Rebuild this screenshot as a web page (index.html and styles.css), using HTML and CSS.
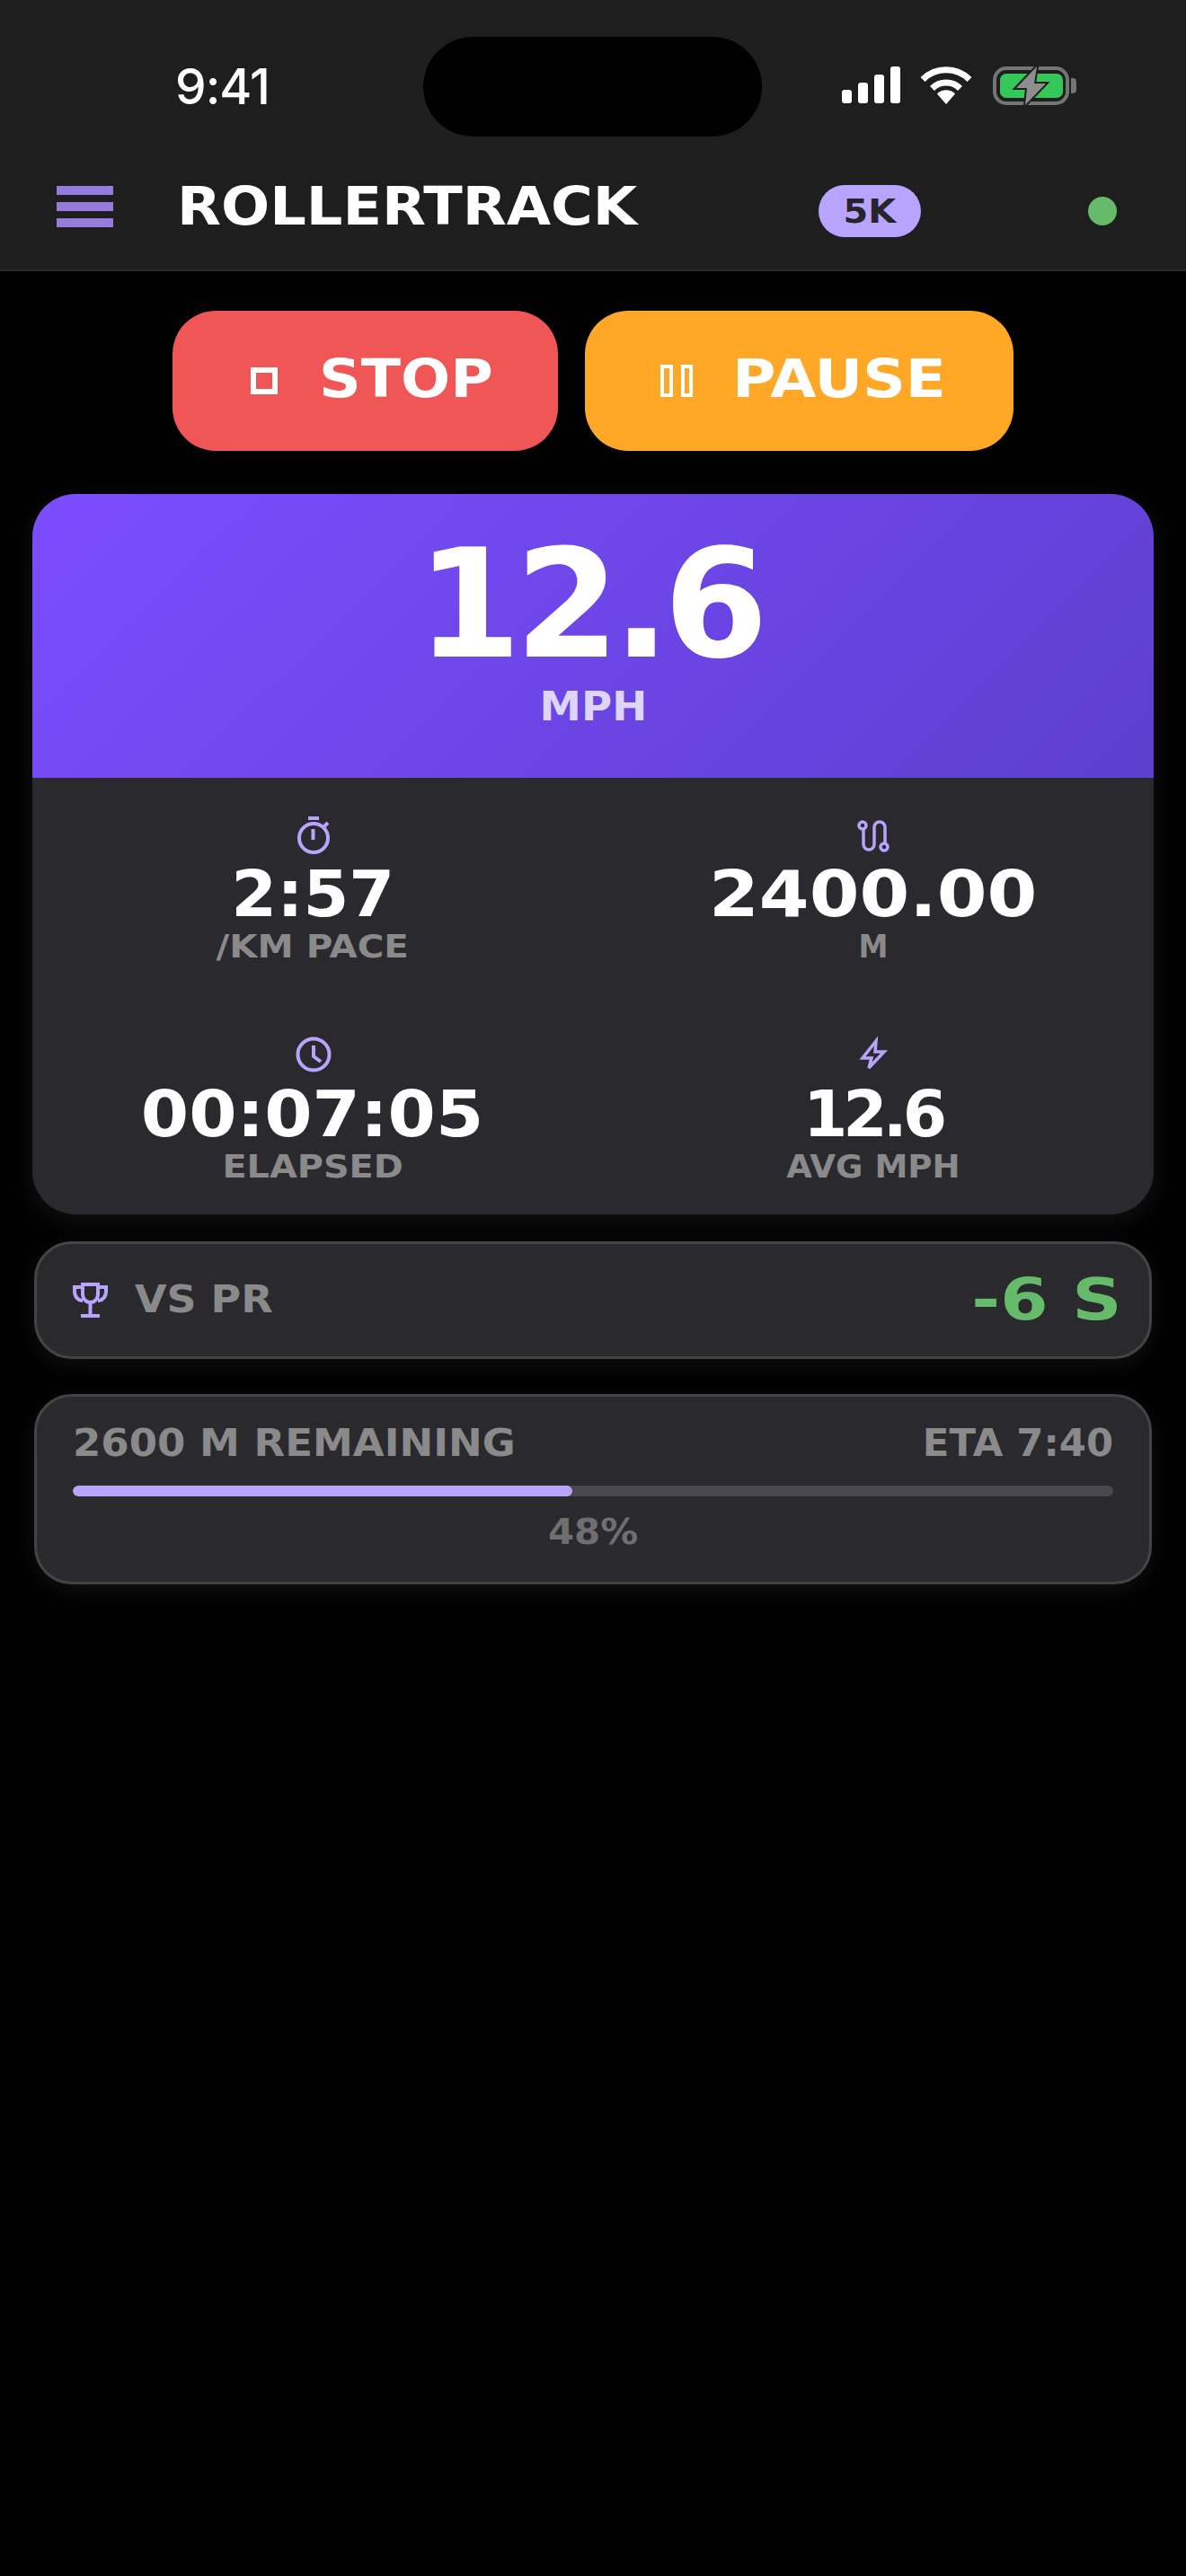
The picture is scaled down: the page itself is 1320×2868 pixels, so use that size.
FILE: index.html
```html
<!DOCTYPE html>
<html lang="en">
<head>
<meta charset="utf-8">
<title>RollerTrack</title>
<link rel="stylesheet" href="styles.css">
</head>
<body>
<header class="chrome">
  <div class="status">
    <span class="time">9:41</span>
    <div class="island"></div>
    <div class="status-icons">
      <svg class="sig" viewBox="0 0 65 41" width="65" height="41"><rect x="0" y="26" width="11" height="15" rx="3"/><rect x="18" y="18" width="11" height="23" rx="3"/><rect x="36" y="9" width="11" height="32" rx="3"/><rect x="54" y="0" width="11" height="41" rx="3"/></svg>
      <svg class="wifi" viewBox="0 0 58 42" width="58" height="42"><path class="wifi-arc" d="M3 14.5A37 37 0 0 1 55 14.5"/><path class="wifi-arc" d="M13.5 24.5A22 22 0 0 1 44.5 24.5"/><path class="wifi-dot" d="M29 42L19 30.500A14 14 0 0 1 39 30.500Z"/></svg>
      <svg class="batt" viewBox="0 0 93 47" width="93" height="47"><rect class="batt-shell" x="2" y="4" width="81" height="39" rx="13"/><rect class="batt-fill" x="8" y="10" width="70" height="27" rx="7"/><path class="batt-cap" d="M87 15h2a4 4 0 0 1 4 4v9a4 4 0 0 1-4 4h-2z"/><path class="batt-bolt" d="M49 2L26 26H38L36 45L59 21H46Z"/></svg>
    </div>
  </div>
  <div class="topbar">
    <div class="menu"><span></span><span></span><span></span></div>
    <div class="brand"><span class="wide sx-brand">ROLLERTRACK</span></div>
    <div class="badge"><span class="wide sx-badge">5K</span></div>
    <div class="live"></div>
  </div>
</header>

<main>
  <div class="actions">
    <button class="btn btn-stop"><span class="ico-stop"></span><span class="btn-text wide sx-stop">STOP</span></button>
    <button class="btn btn-pause"><span class="ico-pause"><i></i><i></i></span><span class="btn-text wide sx-pause">PAUSE</span></button>
  </div>

  <section class="metrics">
    <div class="hero">
      <div class="hero-value">12.6</div>
      <div class="hero-unit"><span class="wide sx-mph">MPH</span></div>
    </div>
    <div class="stats">
      <div class="stat">
        <svg class="ico" viewBox="0 0 48 48" width="48" height="48"><circle cx="25" cy="27" r="16"/><path d="M19 5H31M24.500 17V29M36 15L41 10"/></svg>
        <div class="val sx-pace">2:57</div>
        <div class="lab sx-lab-pace">/KM PACE</div>
      </div>
      <div class="stat">
        <svg class="ico ico-thin" viewBox="0 0 48 48" width="48" height="48"><circle cx="12" cy="13" r="4"/><circle cx="36" cy="37" r="4"/><path d="M13 17V34a6 6 0 0 0 12 0V15a6 6 0 0 1 12 0V33"/></svg>
        <div class="val sx-dist">2400.00</div>
        <div class="lab sx-lab-m">M</div>
      </div>
      <div class="stat">
        <svg class="ico" viewBox="0 0 48 48" width="48" height="48"><circle cx="25" cy="23" r="17.500"/><path d="M25 13V25L33 31"/></svg>
        <div class="val sx-elapsed">00:07:05</div>
        <div class="lab sx-lab-elapsed">ELAPSED</div>
      </div>
      <div class="stat">
        <svg class="ico ico-thin" viewBox="0 0 48 48" width="48" height="48"><path d="M27 8L12 27H22L19 38L36 20H26Z"/></svg>
        <div class="val sx-avg">12.6</div>
        <div class="lab sx-lab-avg">AVG MPH</div>
      </div>
    </div>
  </section>

  <section class="panel pr">
    <div class="pr-left">
      <svg class="ico" viewBox="0 0 48 48" width="48" height="48"><path d="M16 6H33V17a8.500 9 0 0 1-17 0Z"/><path d="M15 9H7V14A9 10 0 0 0 16 24M34 9H42V14A9 10 0 0 1 33 24M24.500 27V41M14 41H35"/></svg>
      <span class="pr-label wide sx-vs">VS PR</span>
    </div>
    <span class="pr-delta wide sx-delta">-6 S</span>
  </section>

  <section class="panel progress">
    <div class="progress-head">
      <span class="wide sx-remain">2600 M REMAINING</span>
      <span class="wide sx-eta">ETA 7:40</span>
    </div>
    <div class="track"><div class="fill" style="width:48%"></div></div>
    <div class="pct"><span class="wide sx-pct">48%</span></div>
  </section>
</main>
</body>
</html>
```

FILE: styles.css
```css
* { box-sizing: border-box; }
html, body { margin: 0; padding: 0; }
body {
  width: 1320px;
  height: 2868px;
  overflow: hidden;
  background: #000;
  color: #fff;
  font-family: "DejaVu Sans", sans-serif;
  font-weight: 700;
}

.wide { display: inline-block; }
.sx-brand { transform: scaleX(1.08); transform-origin: left center; }
.sx-badge { transform: scaleX(1.05); }
.sx-stop { transform: scaleX(1.1); transform-origin: left center; }
.sx-pause { transform: scaleX(1.12); transform-origin: left center; }
.sx-mph { transform: scaleX(1.06); }
.sx-pace { transform: scaleX(1.03); }
.sx-dist { transform: scaleX(1.13); }
.sx-elapsed { transform: scaleX(1.08); }
.sx-avg { letter-spacing: -5px; }
.sx-lab-pace { transform: scaleX(1.12); }
.sx-lab-m { transform: scaleX(.92); }
.sx-lab-elapsed { transform: scaleX(1.105); }
.sx-lab-avg { transform: scaleX(1.03); }
.sx-vs { transform: scaleX(1.08); transform-origin: left center; }
.sx-delta { transform: scaleX(1.19); transform-origin: right center; }
.sx-remain { transform: scaleX(1.06); transform-origin: left center; }
.sx-eta { transform: scaleX(1.02); transform-origin: right center; }
.sx-pct { transform: scaleX(1.087); }

/* status + app bar */
.chrome {
  background: #1e1e1e;
  border-bottom: 2px solid #2b2b2b;
  height: 302px;
  padding-top: 41px;
}
.status {
  display: flex;
  align-items: center;
  height: 111px;
}
.time {
  width: 471px;
  padding-left: 195px;
  font-family: Inter, sans-serif;
  font-weight: 500;
  font-size: 55px;
  letter-spacing: -1px;
  line-height: 111px;
}
.island {
  width: 377px;
  height: 111px;
  border-radius: 56px;
  background: #000;
}
.status-icons {
  display: flex;
  align-items: flex-start;
  margin-left: 89px;
}
.sig { fill: #fff; margin-right: 22px; }
.wifi { margin-right: 23px; }
.wifi-arc { fill: none; stroke: #fff; stroke-width: 7; }
.wifi-dot { fill: #fff; }
.batt { margin-top: -2px; overflow: visible; }
.batt-shell { fill: none; stroke: #757575; stroke-width: 4; }
.batt-fill { fill: #34c759; }
.batt-cap { fill: #757575; }
.batt-bolt { fill: #8e8e8e; stroke: #1e1e1e; stroke-width: 4; paint-order: stroke; }

.topbar {
  display: flex;
  align-items: center;
  height: 130px;
  margin-top: 18px;
  padding-left: 63px;
}
.menu {
  display: flex;
  flex-direction: column;
  gap: 8px;
  width: 63px;
  margin-right: 71px;
  margin-bottom: 10px;
}
.menu span { display: block; height: 10px; background: #967bdf; }
.brand {
  width: 714px;
  font-size: 59px;
  line-height: 60px;
  margin-bottom: 10px;
}
.badge {
  width: 114px;
  height: 58px;
  border-radius: 29px;
  background: #b8a4fd;
  color: #26252b;
  font-size: 38px;
  line-height: 58px;
  text-align: center;
}
.live {
  width: 32px;
  height: 32px;
  border-radius: 50%;
  background: #66bb6a;
  margin-left: 186px;
}

/* action buttons */
.actions {
  display: flex;
  justify-content: center;
  gap: 30px;
  margin-top: 44px;
}
.btn {
  display: flex;
  align-items: center;
  height: 156px;
  border: 0;
  border-radius: 48px;
  color: #fff;
  font-family: inherit;
  font-weight: 700;
  padding: 0;
}
.btn-stop { width: 429px; background: #f05656; padding-left: 87px; }
.btn-pause { width: 477px; background: #ffa726; padding-left: 84px; }
.btn-text { font-size: 59px; line-height: 60px; margin-bottom: 4px; }
.sx-stop { margin-left: 46px; }
.sx-pause { margin-left: 44px; }
.ico-stop { width: 30px; height: 30px; border: 6px solid #fff; }
.ico-pause { display: flex; gap: 9px; }
.ico-pause i { display: block; width: 13.500px; height: 36px; border: 4px solid #fff; }

/* main card */
.metrics {
  margin: 48px 36px 0;
  border-radius: 48px;
  overflow: hidden;
  background: #2a2a2e;
  box-shadow: 0 8px 30px rgba(70, 70, 70, .28);
}
.hero {
  height: 316px;
  padding-top: 38px;
  text-align: center;
  background: linear-gradient(135deg, #7c4dff 0%, #5e3fcf 100%);
}
.hero-value {
  font-size: 167px;
  line-height: 170px;
  letter-spacing: -7px;
  padding-right: 8px;
}
.hero-unit {
  margin-top: 4px;
  font-size: 44px;
  line-height: 50px;
  color: rgba(255, 255, 255, .8);
}
.stats {
  display: grid;
  grid-template-columns: 623px 1fr;
  row-gap: 75px;
  padding: 40px 0 31px;
}
.stat {
  display: flex;
  flex-direction: column;
  align-items: center;
}
.stat:nth-child(odd) { padding-left: 1px; }
.ico {
  display: block;
  fill: none;
  stroke: #b8a4fd;
  stroke-width: 4;
  flex: none;
}
.ico-thin { stroke-width: 3.500; }
.val {
  margin-top: 6px;
  font-size: 71px;
  line-height: 72px;
}
.lab {
  font-size: 36px;
  line-height: 44px;
  color: #8a8a8a;
}

/* panels */
.panel {
  margin: 0 38px;
  background: #2a2a2e;
  border: 3px solid #444;
  border-radius: 42px;
  box-shadow: 0 6px 24px rgba(70, 70, 70, .25);
}
.pr {
  display: flex;
  align-items: center;
  justify-content: space-between;
  height: 131px;
  margin-top: 30px;
  padding: 0 30px 0 35px;
}
.pr-left { display: flex; align-items: center; gap: 26px; }
.pr-label {
  font-size: 42.500px;
  line-height: 50px;
  color: #8a8a8a;
  margin-bottom: 2px;
}
.pr-delta {
  font-size: 64.500px;
  line-height: 70px;
  color: #66bb6a;
  margin-bottom: 2px;
}
.progress {
  margin-top: 39px;
  padding: 27px 40px 33px;
}
.progress-head {
  display: flex;
  justify-content: space-between;
  font-size: 42.500px;
  line-height: 50px;
  color: #8a8a8a;
}
.track {
  height: 12px;
  margin-top: 22px;
  border-radius: 6px;
  background: #49484e;
  overflow: hidden;
}
.fill { height: 100%; border-radius: 6px; background: #b8a4fd; }
.pct {
  margin-top: 18px;
  text-align: center;
  font-size: 38.500px;
  line-height: 44px;
  color: #6f6f6f;
}
```
